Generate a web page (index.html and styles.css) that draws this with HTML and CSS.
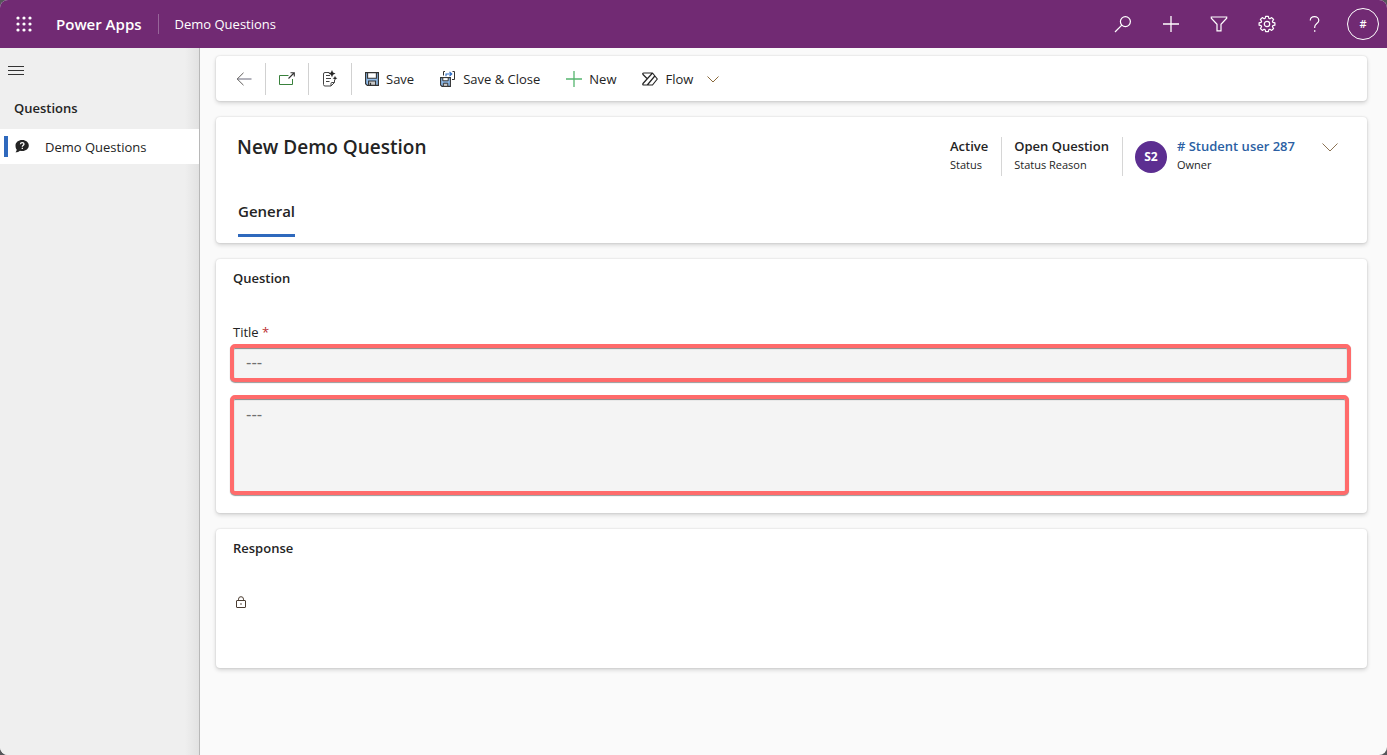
FILE: index.html
```html
<!DOCTYPE html>
<html lang="en">
<head>
<meta charset="utf-8">
<meta name="viewport" content="width=device-width, initial-scale=1">
<title>New Demo Question - Power Apps</title>
<link rel="stylesheet" href="styles.css">
</head>
<body>
<div class="app">
  <header class="topbar">
    <button class="icon-btn waffle" aria-label="App launcher">
      <svg width="16" height="16" viewBox="0 0 16 16" fill="#fff"><circle cx="2" cy="2" r="1.6"/><circle cx="8" cy="2" r="1.6"/><circle cx="14" cy="2" r="1.6"/><circle cx="2" cy="8" r="1.6"/><circle cx="8" cy="8" r="1.6"/><circle cx="14" cy="8" r="1.6"/><circle cx="2" cy="14" r="1.6"/><circle cx="8" cy="14" r="1.6"/><circle cx="14" cy="14" r="1.6"/></svg>
    </button>
    <a class="brand" href="#">Power Apps</a>
    <a class="app-name" href="#">Demo Questions</a>
    <div class="top-actions">
      <button class="icon-btn" aria-label="Search">
        <svg width="18" height="18" viewBox="0 0 18 18" fill="none" stroke="#fff" stroke-width="1.2"><circle cx="11.4" cy="6.6" r="5"/><path d="M7.8 10.2 1 17"/></svg>
      </button>
      <button class="icon-btn" aria-label="New">
        <svg width="18" height="18" viewBox="0 0 18 18" fill="none" stroke="#fff" stroke-width="1.3"><path d="M9 1v16M1 9h16"/></svg>
      </button>
      <button class="icon-btn" aria-label="Filter">
        <svg width="18" height="18" viewBox="0 0 18 18" fill="none" stroke="#fff" stroke-width="1.2"><path d="M1.3 2h15.4v1.2L11 9.3v6.5H7V9.3L1.3 3.2z"/></svg>
      </button>
      <button class="icon-btn" aria-label="Settings">
        <svg width="18" height="18" viewBox="0 0 18 18" fill="none" stroke="#fff" stroke-width="1.2" stroke-linejoin="round"><circle cx="9" cy="9" r="2.7"/><path d="M7.6 1.3h2.8l.4 2 1.1.5 1.8-1.2 1.9 1.9-1.2 1.8.5 1.1 2 .4v2.4l-2 .4-.5 1.1 1.2 1.8-1.9 1.9-1.8-1.2-1.1.5-.4 2H7.6l-.4-2-1.1-.5-1.8 1.2-1.9-1.9 1.2-1.8-.5-1.1-2-.4V7.800l2-.4.5-1.1-1.2-1.8 1.9-1.9 1.8 1.2 1.1-.5z"/></svg>
      </button>
      <button class="icon-btn" aria-label="Help">
        <svg width="18" height="18" viewBox="0 0 18 18" fill="none" stroke="#fff" stroke-width="1.2"><path d="M4.300 5.500C4.300 3 6 1.600 8.500 1.600s4.300 1.400 4.300 3.800C12.800 8.600 8.700 8.500 8.700 12v1"/><path d="M8 16h1.400" stroke-width="1.400"/></svg>
      </button>
      <button class="account" aria-label="Account">#</button>
    </div>
  </header>

  <div class="body">
    <nav class="sidebar" aria-label="Site map">
      <button class="menu" aria-label="Collapse navigation">
        <svg width="16" height="10" viewBox="0 0 16 10" stroke="#333" stroke-width="1"><path d="M0 .5h16M0 4.500h16M0 8.500h16"/></svg>
      </button>
      <h2 class="nav-group">Questions</h2>
      <a class="nav-item" href="#" aria-current="page">
        <svg width="14" height="13" viewBox="0 0 14 13"><path d="M7.200 0C11 0 13.800 2.400 13.800 5.500S11 11 7.200 11c-.8 0-1.600-.1-2.300-.3C3.600 11.800 2 12.300.4 12.200c.8-.7 1.300-1.600 1.300-2.700C.8 8.500.5 7 .5 5.500.5 2.400 3.400 0 7.200 0z" fill="#242424"/><path d="M5.400 4.300C5.500 3.200 6.200 2.600 7.200 2.600S9 3.200 9 4.100C9 5.300 7.300 5.400 7.300 6.800M7.300 7.800v1.300" fill="none" stroke="#fff" stroke-width="1.300"/></svg>
        <span>Demo Questions</span>
      </a>
    </nav>

    <main class="content">
      <div class="card toolbar" role="toolbar" aria-label="Commands">
        <button class="cmd cell" aria-label="Back">
          <svg width="16" height="16" viewBox="0 0 16 16" fill="none"><path d="M1 8h14.500" stroke="#9a9aa6" stroke-width="1.400"/><path d="M7.500 1.800 1.200 8l6.300 6.200" stroke="#605e5c"/></svg>
        </button>
        <button class="cmd cell" aria-label="Open in new window">
          <svg width="16" height="14" viewBox="0 0 16 14" fill="none"><path d="M9.500 3.500h-9v9h13V7" stroke="#39813c"/><path d="M9.500 6.500 15 1M11.500.7h3.800v3.800" stroke="#333" stroke-width="1.100"/></svg>
        </button>
        <button class="cmd cell" aria-label="Form fill assistance">
          <svg width="16" height="18" viewBox="0 0 16 18" fill="none"><path d="M7.500 2.500H3Q1.500 2.500 1.500 4v10.500Q1.500 16 3 16h6l3.500-3.500V10M9 16v-2.500q0-1 1-1h2.500M4 5.500h4M4 8.500h5M4 11.500h3.500" stroke="#444"/><path d="m10 0 1 2.500L13.500 3.600 11 4.700 10 7.200 8.900 4.700 6.500 3.600 8.900 2.500zM13 5.800l.7 1.700 1.700.7-1.700.7-.7 1.700-.7-1.700-1.700-.7 1.700-.7z" fill="#242424"/></svg>
        </button>
        <button class="cmd">
          <svg width="14" height="14" viewBox="0 0 14 14"><path d="M.6.6h12.800v12.800H2.300L.6 11.700z" fill="#8fbcec" stroke="#333" stroke-width="1.200"/><path d="M2.600.6h8.800v5.600H2.600z" fill="#fff" stroke="#333" stroke-width="1.100"/><path d="M3.600 9h7v4.400h-7z" fill="#c8c8c8" stroke="#333" stroke-width="1.100"/><path d="M5.500 10.800v2.600" stroke="#333" stroke-width="1.200"/></svg>
          <span>Save</span>
        </button>
        <button class="cmd">
          <svg width="16" height="16" viewBox="0 0 16 16" fill="none"><path d="M5 .5H3.500v4M12.500.5h2v8H12" stroke="#333"/><path d="M.6 6.600h9.800v8.800H2L.6 14z" fill="#8fbcec" stroke="#333" stroke-width="1.100"/><path d="M2.800 6.600h5.400v3.200H2.800z" fill="#fff" stroke="#333"/><path d="M3.300 12.200h4.500v3.200H3.300z" fill="#c8c8c8" stroke="#333"/><path d="M6 5.200V3h5.500M9.500.8 11.800 3 9.500 5.200" stroke="#2b6cc4" stroke-width="1.100"/></svg>
          <span>Save &amp; Close</span>
        </button>
        <button class="cmd">
          <svg width="16" height="16" viewBox="0 0 16 16" fill="none" stroke="#55b56f" stroke-width="1.300"><path d="M8 0v16M0 8h16"/></svg>
          <span>New</span>
        </button>
        <button class="cmd">
          <svg width="16" height="14" viewBox="0 0 16 14" fill="none" stroke="#242424" stroke-width="1.200" stroke-linejoin="round"><path d="M5 6.500 1 2.500Q.3 1 1.800 1h8.700l4.800 6-4.800 6H5.300L12.800 4M10.500 1 1 11.500Q.3 13 1.800 13h3.500"/></svg>
          <span>Flow</span>
          <svg class="chevron" width="12" height="7" viewBox="0 0 12 7" fill="none" stroke="#8a6a3c"><path d="m.5.5 5.500 5.500L11.500.5"/></svg>
        </button>
      </div>

      <section class="card record">
        <div class="record-head">
          <h1>New Demo Question</h1>
          <dl class="facts">
            <div class="fact"><dd>Active</dd><dt>Status</dt></div>
            <div class="fact"><dd>Open Question</dd><dt>Status Reason</dt></div>
            <div class="fact owner">
              <span class="avatar">S2</span>
              <div><dd><a href="#"># Student user 287</a></dd><dt>Owner</dt></div>
            </div>
          </dl>
          <button class="expand" aria-label="Show more header fields">
            <svg width="16" height="9" viewBox="0 0 16 9" fill="none" stroke="#8c7355"><path d="m.5.5 7.500 7.500L15.500.5"/></svg>
          </button>
        </div>
        <div class="tabs" role="tablist">
          <button class="tab" role="tab" aria-selected="true">General</button>
        </div>
      </section>

      <section class="card section">
        <h2>Question</h2>
        <label class="label" for="title">Title <span class="required">*</span></label>
        <input class="field" id="title" type="text" placeholder="---">
        <textarea class="field area" aria-label="Question details" placeholder="---"></textarea>
      </section>

      <section class="card section response">
        <h2>Response</h2>
        <svg class="lock" width="12" height="13" viewBox="0 0 12 13" fill="none" stroke="#4a3c30"><rect x="1.500" y="4.500" width="9" height="7" rx=".5"/><path d="M3.500 4.500V3.200a2.500 2.500 0 0 1 5 0v1.300"/><path d="M5.400 8h1.200" stroke-width="1.300"/></svg>
      </section>
    </main>
  </div>
</div>
</body>
</html>
```
FILE: styles.css
```css
* { box-sizing: border-box; }
html { height: 100%; background: #55565a; }
body {
  margin: 0;
  min-height: 100%;
  display: flex;
  font-family: "Open Sans", "Noto Sans", sans-serif;
  font-size: 13px;
  line-height: 20px;
  color: #242424;
}
h1, h2, dl, dd, dt { margin: 0; }
button { font: inherit; color: inherit; background: none; border: 0; padding: 0; cursor: pointer; }
a { color: inherit; text-decoration: none; }
svg { display: block; flex: none; }

.app {
  flex: 1;
  min-height: 100vh;
  display: flex;
  flex-direction: column;
  border-radius: 8px;
  overflow: hidden;
  background: #fafafa;
}

.topbar { height: 48px; display: flex; align-items: center; background: #712a73; color: #fff; }
.icon-btn { width: 48px; height: 48px; display: grid; place-items: center; }
.brand { padding: 0 16px 0 8px; font-size: 15px; font-weight: 600; }
.app-name { padding-left: 16px; border-left: 1px solid #98659a; }
.top-actions { margin-left: auto; display: flex; align-items: center; padding-right: 8px; }
.account { width: 32px; height: 32px; margin-left: 8px; border: 1px solid #fff; border-radius: 50%; font-size: 11px; font-weight: 600; }

.body { flex: 1; display: flex; }
.sidebar {
  width: 200px;
  flex: none;
  border-right: 1px solid #b8b8b8;
  background: linear-gradient(to left, #e2e2e2, #efefef 14px);
}
.menu { display: block; padding: 18px 8px; }
.nav-group { padding: 4px 14px 11px; font-size: 13px; font-weight: 600; }
.nav-item { position: relative; display: flex; align-items: center; gap: 16px; height: 35px; padding-left: 15px; background: #fff; }
.nav-item::before { content: ""; position: absolute; left: 4px; top: 7px; bottom: 7px; width: 4px; background: #2f69bd; }

.content { flex: 1; min-width: 0; padding: 8px 20px 16px 16px; display: flex; flex-direction: column; gap: 16px; }
.card { background: #fff; border-radius: 4px; box-shadow: 0 0 2px rgba(0,0,0,.14), 0 2px 4px rgba(0,0,0,.16); }

.toolbar { height: 45px; display: flex; align-items: center; padding: 1px 0 0 7px; }
.cmd { height: 32px; display: flex; align-items: center; gap: 7px; padding: 0 13px; }
.cell { width: 43px; justify-content: center; border-right: 1px solid #d1d1d1; }
.chevron { margin-left: 7px; }

.record { height: 126px; padding: 18px 29px 6px 21px; display: flex; flex-direction: column; justify-content: space-between; }
.record-head { display: flex; align-items: flex-start; }
h1 { font-size: 19px; line-height: 24px; font-weight: 600; }
.facts { margin-left: auto; display: flex; padding-top: 2px; }
.fact { height: 39px; padding: 0 13px 0 12px; border-right: 1px solid #d6d6d6; }
.fact dd { font-weight: 600; line-height: 19px; }
.fact dt { font-size: 11px; line-height: 18px; }
.owner { display: flex; gap: 10px; border: 0; }
.owner a { color: #2b5fa3; }
.avatar { width: 32px; height: 32px; margin-top: 4px; border-radius: 50%; background: #5c2e91; color: #fff; font-size: 12px; font-weight: 700; display: grid; place-items: center; }
.expand { margin-left: 14px; padding: 8px 0; }
.tabs { display: flex; }
.tab { height: 36px; margin-left: 1px; padding-bottom: 13px; border-bottom: 3px solid #2f69bd; font-size: 15px; font-weight: 600; line-height: 20px; }

.section { padding: 9px 16px 18px 17px; display: flex; flex-direction: column; }
.section h2 { font-size: 13px; font-weight: 600; line-height: 20px; }
.label { margin-top: 34px; line-height: 20px; }
.required { color: #bc2f32; }
.field {
  display: block;
  height: 38px;
  margin: 2px 0 0 -3px;
  padding: 0 12px;
  border: 4px solid #ff6b6b;
  border-radius: 5px;
  outline: 0;
  background: #f4f4f4;
  box-shadow: inset 0 1px 1px #888, 0 1px 1px #999;
  font: inherit;
  color: inherit;
}
.field::placeholder { color: #707070; opacity: 1; font-family: "DejaVu Sans", sans-serif; font-size: 15px; }
.area { height: 100px; margin: 13px 2px 0 -3px; padding-top: 6px; resize: none; }
.response { height: 139px; }
.lock { margin: 38px 0 0 2px; }
```
